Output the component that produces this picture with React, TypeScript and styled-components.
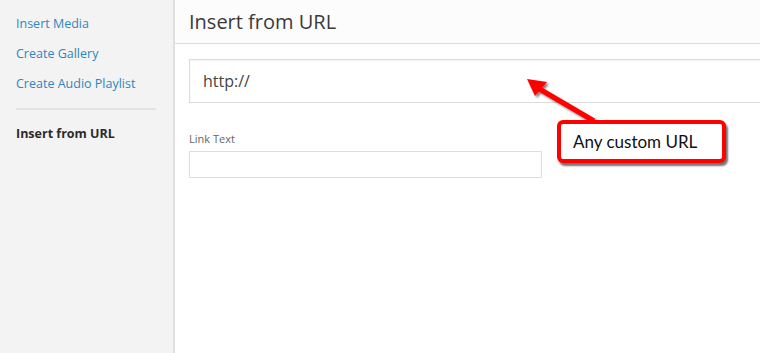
import styled, { createGlobalStyle } from "styled-components"

const GlobalStyle = createGlobalStyle`
html, body {
  margin: 0;
  padding: 0;
  background: #fff;
}
body {
  font-family: 'Open Sans', 'Liberation Sans', sans-serif;
}
`

const Frame = styled.div`
position: relative;
display: flex;
width: 760px;
height: 353px;
overflow: hidden;
background: #fff;
`

const SideBar = styled.div`
flex: none;
width: 173px;
background: #f3f3f3;
border-right: 2px solid #e0e0e0;
padding-top: 15px;
box-sizing: content-box;
`

const MenuItem = styled.div<{ $active?: boolean }>`
padding: 0 16px;
height: 30px;
line-height: 18px;
font-size: 12.5px;
color: ${p => (p.$active ? "#2b2b2b" : "#2f86bd")};
font-weight: ${p => (p.$active ? 700 : 400)};
white-space: nowrap;
`

const Separator = styled.div`
height: 2px;
background: #e3e3e3;
margin: 3px 17px 15px 16px;
`

const Main = styled.div`
flex: none;
width: 640px;
display: flex;
flex-direction: column;
`

const Header = styled.div`
height: 43px;
background: #fcfcfc;
border-bottom: 1px solid #dedede;
display: flex;
align-items: center;
padding: 0 14px;
`

const Title = styled.h1`
margin: 0;
font-size: 20px;
font-weight: 500;
color: #3a3a3a;
`

const Content = styled.div`
padding: 15px 14px;
`

const UrlInput = styled.div`
box-sizing: border-box;
width: 100%;
height: 44px;
border: 1px solid #dcdcdc;
box-shadow: inset 0 1px 2px rgba(0, 0, 0, 0.05);
display: flex;
align-items: center;
padding: 0 13px;
font-size: 16px;
color: #444;
`

const Label = styled.div`
margin-top: 29px;
font-size: 11px;
color: #666;
line-height: 14px;
`

const TextInput = styled.div`
box-sizing: border-box;
margin-top: 5px;
width: 353px;
height: 27px;
border: 1px solid #dedede;
`

const Callout = styled.div`
position: absolute;
left: 557px;
top: 120px;
box-sizing: border-box;
width: 169px;
height: 43px;
border: 4px solid #ff0000;
border-radius: 6px;
background: #fff;
box-shadow: 2px 3px 2px rgba(0, 0, 0, 0.55);
font-family: Lato, 'Liberation Sans', sans-serif;
font-size: 17px;
color: #111;
display: flex;
align-items: center;
padding-left: 12px;
`

const ArrowLayer = styled.svg`
position: absolute;
left: 0;
top: 0;
pointer-events: none;
`

const App = () => {
    return (
        <>
            <GlobalStyle />
            <Frame>
                <SideBar>
                    <MenuItem>Insert Media</MenuItem>
                    <MenuItem>Create Gallery</MenuItem>
                    <MenuItem>Create Audio Playlist</MenuItem>
                    <Separator />
                    <MenuItem $active>Insert from URL</MenuItem>
                </SideBar>
                <Main>
                    <Header>
                        <Title>Insert from URL</Title>
                    </Header>
                    <Content>
                        <UrlInput>http://</UrlInput>
                        <Label>Link Text</Label>
                        <TextInput />
                    </Content>
                </Main>
                <ArrowLayer width={760} height={353}>
                    <defs>
                        <filter id="shadow" x="-20%" y="-20%" width="150%" height="150%">
                            <feDropShadow dx="2" dy="2" stdDeviation="1" floodColor="#000" floodOpacity="0.5" />
                        </filter>
                    </defs>
                    <g filter="url(#shadow)">
                        <line x1={594} y1={121} x2={536} y2={87} stroke="#ff0000" strokeWidth={5} />
                        <polygon points="527,79 547,82 535,96" fill="#ff0000" />
                    </g>
                </ArrowLayer>
                <Callout>Any custom URL</Callout>
            </Frame>
        </>
    )
}

export default App
